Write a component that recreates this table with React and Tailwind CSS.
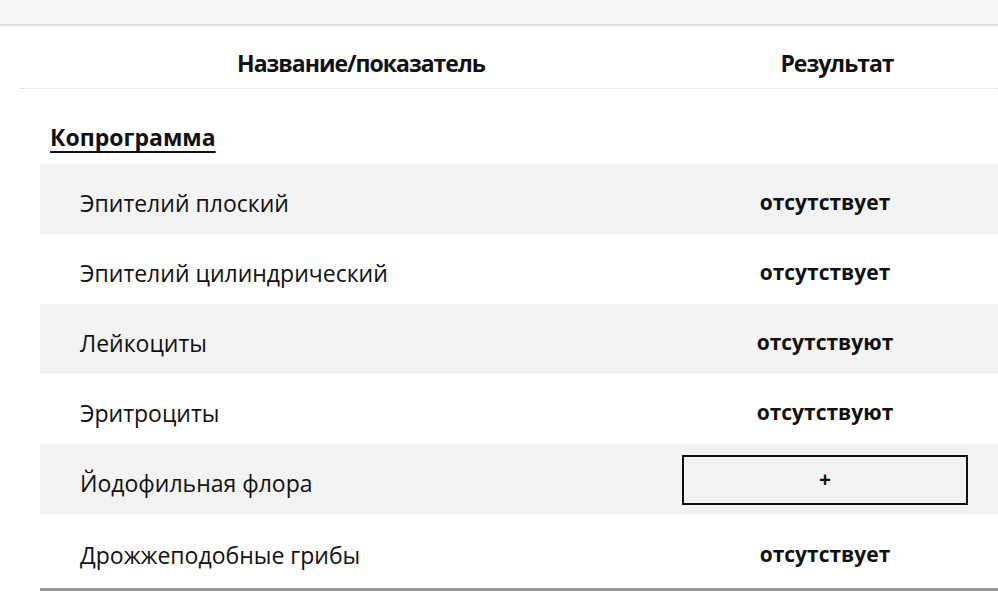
import React from 'react';

const rows = [
  { name: 'Эпителий плоский', value: 'отсутствует' },
  { name: 'Эпителий цилиндрический', value: 'отсутствует' },
  { name: 'Лейкоциты', value: 'отсутствуют' },
  { name: 'Эритроциты', value: 'отсутствуют' },
  { name: 'Йодофильная флора', value: '+', boxed: true },
  { name: 'Дрожжеподобные грибы', value: 'отсутствует' },
];

const App = () => {
  return (
    <div
      className="w-[998px] h-[600px] bg-white text-[#111] overflow-hidden"
      style={{ fontFamily: '"Open Sans", "Noto Sans", sans-serif' }}
    >
      <div className="h-[26px] bg-[#f8f8fa] border-b-2 border-[#dedee2]" />

      <div className="pl-[40px]">
        <div className="flex h-[62px] items-end pb-[8px] text-[23px] font-bold tracking-[-1px]">
          <div className="w-[642px] text-center">Название/показатель</div>
          <div className="w-[310px] text-center">Результат</div>
        </div>
      </div>
      <div className="ml-[20px] border-t border-dotted border-[#d4d4d4]" />

      <div className="pl-[40px]">
        <div className="h-[75px] flex items-center pl-[10px] pt-[22px]">
          <span className="text-[23px] font-bold underline underline-offset-[5px] decoration-[2px]">
            Копрограмма
          </span>
        </div>

        <div className="border-b-[3px] border-[#959595]">
          {rows.map((row, i) => (
            <div
              key={row.name}
              className={`flex items-center ${i === rows.length - 1 ? 'h-[74px]' : 'h-[70px]'} ${i % 2 === 0 ? 'bg-[#f2f2f2]' : 'bg-white'}`}
            >
              <div className="w-[642px] pl-[40px] pt-[8px] text-[23px]">{row.name}</div>
              {row.boxed ? (
                <div className="w-[286px] h-[50px] mt-[2px] border-2 border-[#111] flex items-center justify-center text-[21px] font-bold">
                  {row.value}
                </div>
              ) : (
                <div className="w-[286px] pt-[8px] text-center text-[21px] font-bold">{row.value}</div>
              )}
            </div>
          ))}
        </div>
      </div>
    </div>
  );
};

export default App;
